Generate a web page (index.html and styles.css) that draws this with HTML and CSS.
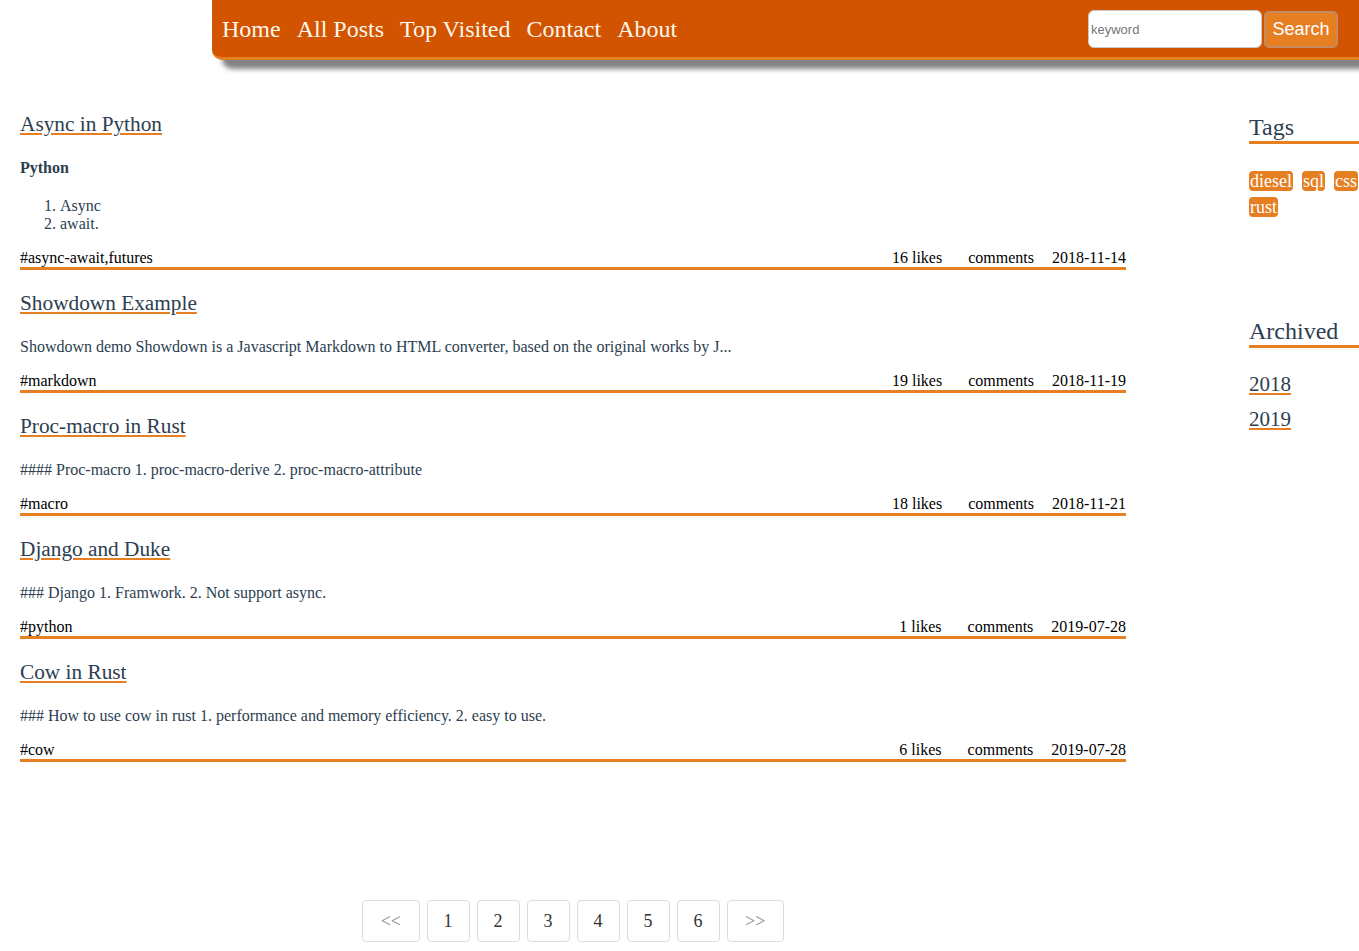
FILE: index.html
```html
<!DOCTYPE html>
<html lang="en">
<head>
<meta charset="utf-8">
<title>Blog</title>
<link rel="stylesheet" href="styles.css">
</head>
<body>
<header class="topbar">
  <nav class="nav">
    <a href="#">Home</a>
    <a href="#">All Posts</a>
    <a href="#">Top Visited</a>
    <a href="#">Contact</a>
    <a href="#">About</a>
  </nav>
  <form class="search">
    <input class="search-input" type="text" placeholder="keyword">
    <button class="search-btn" type="button">Search</button>
  </form>
</header>

<div class="page">
  <main class="content">
    <article class="post">
      <h2 class="post-title"><a href="#">Async in Python</a></h2>
      <div class="post-body">
        <h4>Python</h4>
        <ol>
          <li>Async</li>
          <li>await.</li>
        </ol>
      </div>
      <div class="post-meta">
        <span class="tags-line">#async-await,futures</span>
        <span class="likes">16 likes</span>
        <span class="comments">comments</span>
        <span class="date">2018-11-14</span>
      </div>
    </article>

    <article class="post">
      <h2 class="post-title"><a href="#">Showdown Example</a></h2>
      <div class="post-body">
        <p>Showdown demo Showdown is a Javascript Markdown to HTML converter, based on the original works by J...</p>
      </div>
      <div class="post-meta">
        <span class="tags-line">#markdown</span>
        <span class="likes">19 likes</span>
        <span class="comments">comments</span>
        <span class="date">2018-11-19</span>
      </div>
    </article>

    <article class="post">
      <h2 class="post-title"><a href="#">Proc-macro in Rust</a></h2>
      <div class="post-body">
        <p>#### Proc-macro 1. proc-macro-derive 2. proc-macro-attribute</p>
      </div>
      <div class="post-meta">
        <span class="tags-line">#macro</span>
        <span class="likes">18 likes</span>
        <span class="comments">comments</span>
        <span class="date">2018-11-21</span>
      </div>
    </article>

    <article class="post">
      <h2 class="post-title"><a href="#">Django and Duke</a></h2>
      <div class="post-body">
        <p>### Django 1. Framwork. 2. Not support async.</p>
      </div>
      <div class="post-meta">
        <span class="tags-line">#python</span>
        <span class="likes">1 likes</span>
        <span class="comments">comments</span>
        <span class="date">2019-07-28</span>
      </div>
    </article>

    <article class="post">
      <h2 class="post-title"><a href="#">Cow in Rust</a></h2>
      <div class="post-body">
        <p>### How to use cow in rust 1. performance and memory efficiency. 2. easy to use.</p>
      </div>
      <div class="post-meta">
        <span class="tags-line">#cow</span>
        <span class="likes">6 likes</span>
        <span class="comments">comments</span>
        <span class="date">2019-07-28</span>
      </div>
    </article>

    <nav class="pager">
      <a class="page-btn arrow" href="#">&lt;&lt;</a>
      <a class="page-btn" href="#">1</a>
      <a class="page-btn" href="#">2</a>
      <a class="page-btn" href="#">3</a>
      <a class="page-btn" href="#">4</a>
      <a class="page-btn" href="#">5</a>
      <a class="page-btn" href="#">6</a>
      <a class="page-btn arrow" href="#">&gt;&gt;</a>
    </nav>
  </main>

  <aside class="sidebar">
    <h3 class="side-title">Tags</h3>
    <div class="tag-list">
      <a class="tag" href="#">diesel</a>
      <a class="tag" href="#">sql</a>
      <a class="tag" href="#">css</a>
      <a class="tag" href="#">rust</a>
    </div>
    <h3 class="side-title archived">Archived</h3>
    <div class="years">
      <a class="year" href="#">2018</a>
      <a class="year" href="#">2019</a>
    </div>
  </aside>
</div>
</body>
</html>
```

FILE: styles.css
```css
html, body {
  margin: 0;
  padding: 0;
  overflow-x: hidden;
}

body {
  font-family: "Liberation Serif", "Times New Roman", serif;
  color: #2c3e50;
  background: #ffffff;
}

a {
  text-decoration: none;
}

/* ---------- top bar ---------- */
.topbar {
  margin-left: 212px;
  height: 57px;
  background: #d35400;
  border-bottom: 3px solid #e67e22;
  border-radius: 0 0 0 10px;
  box-shadow: 10px 9px 5px rgba(90, 90, 90, 0.75);
  display: flex;
  align-items: center;
  justify-content: space-between;
  padding: 0 21px 0 10px;
}

.nav {
  display: flex;
  gap: 16px;
  padding-top: 2px;
}

.nav a {
  color: #fdf6ec;
  font-size: 24px;
  line-height: normal;
}

.search {
  display: flex;
  align-items: center;
  gap: 2px;
  margin: 0;
  padding-top: 1px;
}

.search-input {
  box-sizing: border-box;
  width: 174px;
  height: 38px;
  border: 1px solid #c9c9c9;
  border-radius: 6px;
  padding: 0 2px;
  font-family: "Liberation Sans", Arial, sans-serif;
  font-size: 13px;
  background: #fff;
  outline: none;
}

.search-input::placeholder {
  color: #767676;
}

.search-btn {
  box-sizing: border-box;
  width: 74px;
  height: 37px;
  background: #e67e22;
  border: 2px solid #c48a62;
  border-radius: 5px;
  color: #fff;
  font-family: "Liberation Sans", Arial, sans-serif;
  font-size: 18px;
  padding: 0;
}

/* ---------- page grid ---------- */
.page {
  display: grid;
  grid-template-columns: 1106px 110px;
  column-gap: 123px;
  padding: 30.5px 0 0 20px;
}

/* ---------- posts ---------- */
.post-title {
  font-size: 21.3px;
  font-weight: normal;
  line-height: 26px;
  margin: 20.5px 0 21.5px;
}

.post-title a {
  color: #2c3e50;
  text-decoration: underline;
  text-decoration-color: #e67e22;
  text-decoration-thickness: 2px;
  text-underline-offset: 2px;
}

.post-body {
  font-size: 16px;
  line-height: normal;
  color: #2c3e50;
}

.post-body h4 {
  font-size: 16px;
  font-weight: bold;
  margin: 0 0 20px;
}

.post-body ol {
  margin: 0 0 1.5px;
  padding-left: 40px;
}

.post-body p {
  margin: 0;
}

.post-meta {
  margin-top: 16px;
  display: flex;
  font-size: 16px;
  line-height: normal;
  color: #000;
  border-bottom: 3px solid #e67e22;
}

.likes {
  margin-left: auto;
}

.comments {
  margin-left: 26px;
}

.date {
  margin-left: 18px;
}

/* ---------- pager ---------- */
.pager {
  display: flex;
  justify-content: center;
  gap: 7px;
  margin-top: 138px;
}

.page-btn {
  display: block;
  height: 40px;
  line-height: 40px;
  padding: 0 16px;
  border: 1px solid #dddddd;
  border-radius: 4px;
  font-size: 18px;
  color: #333;
}

.page-btn.arrow {
  color: #8a8a8a;
  padding: 0 17.5px;
}

/* ---------- sidebar ---------- */
.sidebar {
  width: 110px;
}

.side-title {
  font-size: 24px;
  font-weight: normal;
  line-height: normal;
  margin: 23px 0 0;
  border-bottom: 3px solid #e67e22;
  color: #2c3e50;
}

.tag-list {
  display: flex;
  flex-wrap: wrap;
  column-gap: 9px;
  row-gap: 6px;
  margin-top: 27.5px;
}

.tag {
  display: block;
  background: #e67e22;
  color: #fff;
  font-size: 18px;
  line-height: 20px;
  padding: 0 1px;
  border-radius: 4px;
}

.side-title.archived {
  margin-top: 101px;
}

.years {
  margin-top: 19px;
  display: flex;
  flex-direction: column;
  align-items: flex-start;
}

.year {
  font-size: 21px;
  line-height: 35px;
  color: #2c3e50;
  text-decoration: underline;
  text-decoration-color: #e67e22;
  text-decoration-thickness: 2px;
  text-underline-offset: 2px;
}
```
